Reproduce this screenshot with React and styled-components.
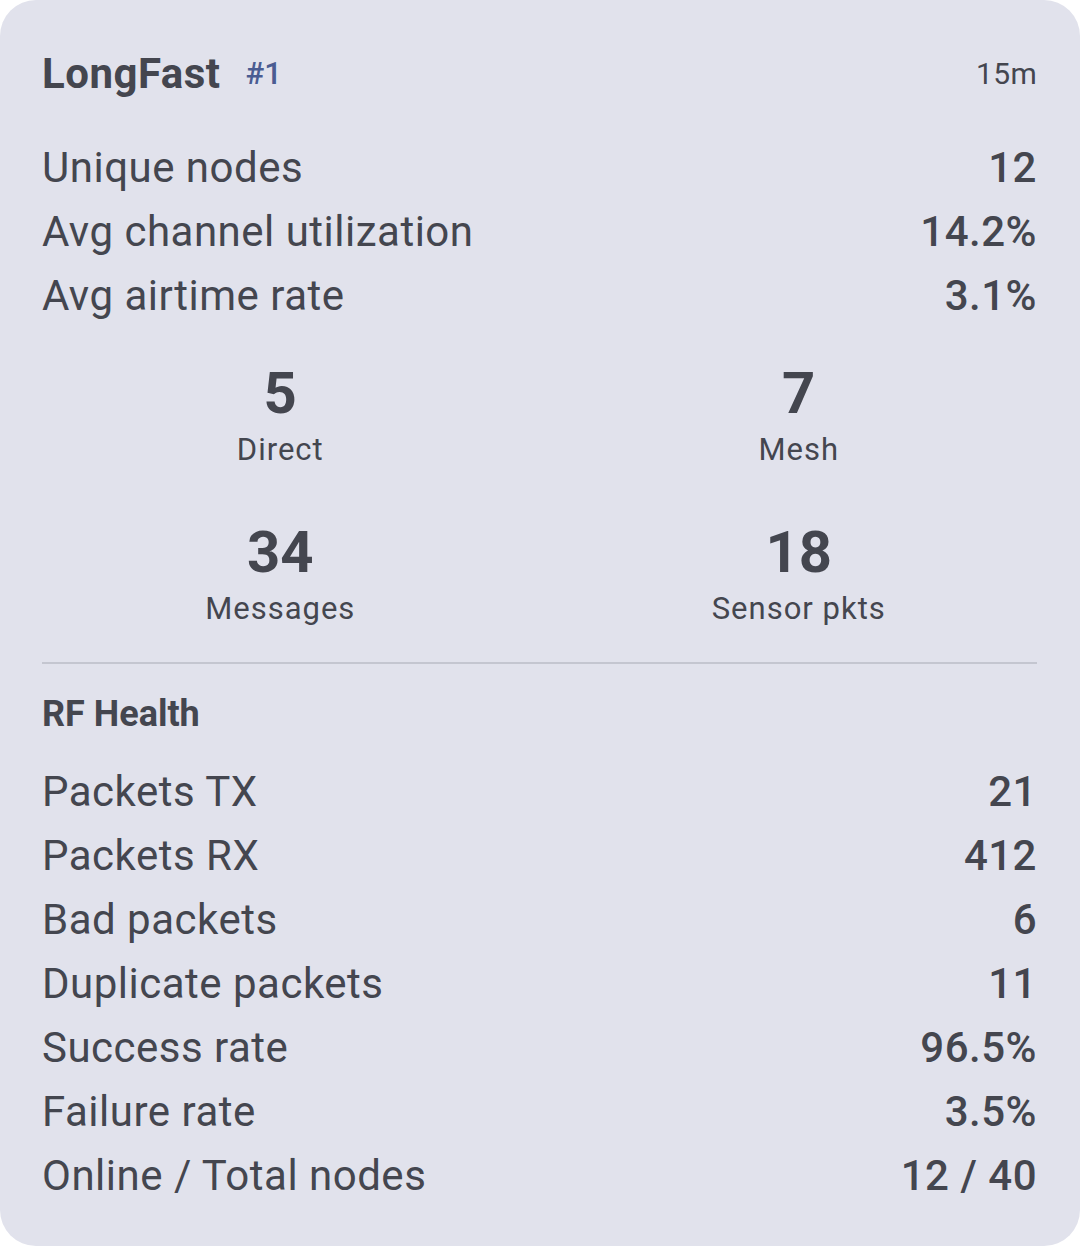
import React from "react";
import styled, { createGlobalStyle } from "styled-components";

const channel = {
  name: "LongFast",
  index: 1,
  window: "15m",
  summary: [
    { label: "Unique nodes", value: "12" },
    { label: "Avg channel utilization", value: "14.2%" },
    { label: "Avg airtime rate", value: "3.1%" },
  ],
  tiles: [
    { value: "5", label: "Direct" },
    { value: "7", label: "Mesh" },
    { value: "34", label: "Messages" },
    { value: "18", label: "Sensor pkts" },
  ],
  health: [
    { label: "Packets TX", value: "21" },
    { label: "Packets RX", value: "412" },
    { label: "Bad packets", value: "6" },
    { label: "Duplicate packets", value: "11" },
    { label: "Success rate", value: "96.5%" },
    { label: "Failure rate", value: "3.5%" },
    { label: "Online / Total nodes", value: "12 / 40" },
  ],
};

const App = () => {
  return (
    <>
      <GlobalStyle />
      <Card>
        <Header>
          <TitleWrap>
            <Title>{channel.name}</Title>
            <Index>#{channel.index}</Index>
          </TitleWrap>
          <Window>{channel.window}</Window>
        </Header>

        <Rows top={31}>
          {channel.summary.map((r) => (
            <Row key={r.label}>
              <span>{r.label}</span>
              <Value>{r.value}</Value>
            </Row>
          ))}
        </Rows>

        <Tiles>
          {channel.tiles.map((t) => (
            <Tile key={t.label}>
              <Big>{t.value}</Big>
              <TileLabel>{t.label}</TileLabel>
            </Tile>
          ))}
        </Tiles>

        <Divider />

        <SectionTitle>RF Health</SectionTitle>

        <Rows top={21}>
          {channel.health.map((r) => (
            <Row key={r.label}>
              <span>{r.label}</span>
              <Value>{r.value}</Value>
            </Row>
          ))}
        </Rows>
      </Card>
    </>
  );
};

export default App;

const GlobalStyle = createGlobalStyle`
  body {
    margin: 0;
    background: #ffffff;
    font-family: Roboto, "Noto Sans", sans-serif;
  }
`;

const Card = styled.div`
  box-sizing: border-box;
  min-height: 1246px;
  background: #e1e2ec;
  border-radius: 36px;
  padding: 42px 43px 38px 42px;
  color: #44464f;
`;

const Header = styled.div`
  display: flex;
  justify-content: space-between;
  align-items: center;
`;

const TitleWrap = styled.div`
  display: flex;
  align-items: center;
  gap: 25px;
`;

const Title = styled.div`
  font-size: 42px;
  line-height: 63px;
  font-weight: 700;
  letter-spacing: 0.5px;
`;

const Index = styled.span`
  font-size: 31px;
  font-weight: 500;
  color: #4a5c92;
`;

const Window = styled.span`
  font-size: 30px;
  letter-spacing: 0.3px;
`;

const Rows = styled.div`
  margin-top: ${(p) => p.top}px;
`;

const Row = styled.div`
  display: flex;
  justify-content: space-between;
  font-size: 42px;
  line-height: 64px;
  letter-spacing: 0.5px;
`;

const Value = styled.span`
  font-weight: 500;
`;

const Tiles = styled.div`
  display: grid;
  grid-template-columns: 1fr 1fr;
  column-gap: 42px;
  row-gap: 45px;
  margin-top: 30px;
  text-align: center;
`;

const Tile = styled.div`
  display: flex;
  flex-direction: column;
  align-items: center;
`;

const Big = styled.div`
  font-size: 58px;
  line-height: 70px;
  font-weight: 700;
`;

const TileLabel = styled.div`
  font-size: 31px;
  line-height: 44px;
  letter-spacing: 1px;
`;

const Divider = styled.div`
  height: 2px;
  background: #c4c6d0;
  margin-top: 31px;
`;

const SectionTitle = styled.div`
  margin-top: 25px;
  font-size: 36px;
  line-height: 50px;
  font-weight: 700;
`;
